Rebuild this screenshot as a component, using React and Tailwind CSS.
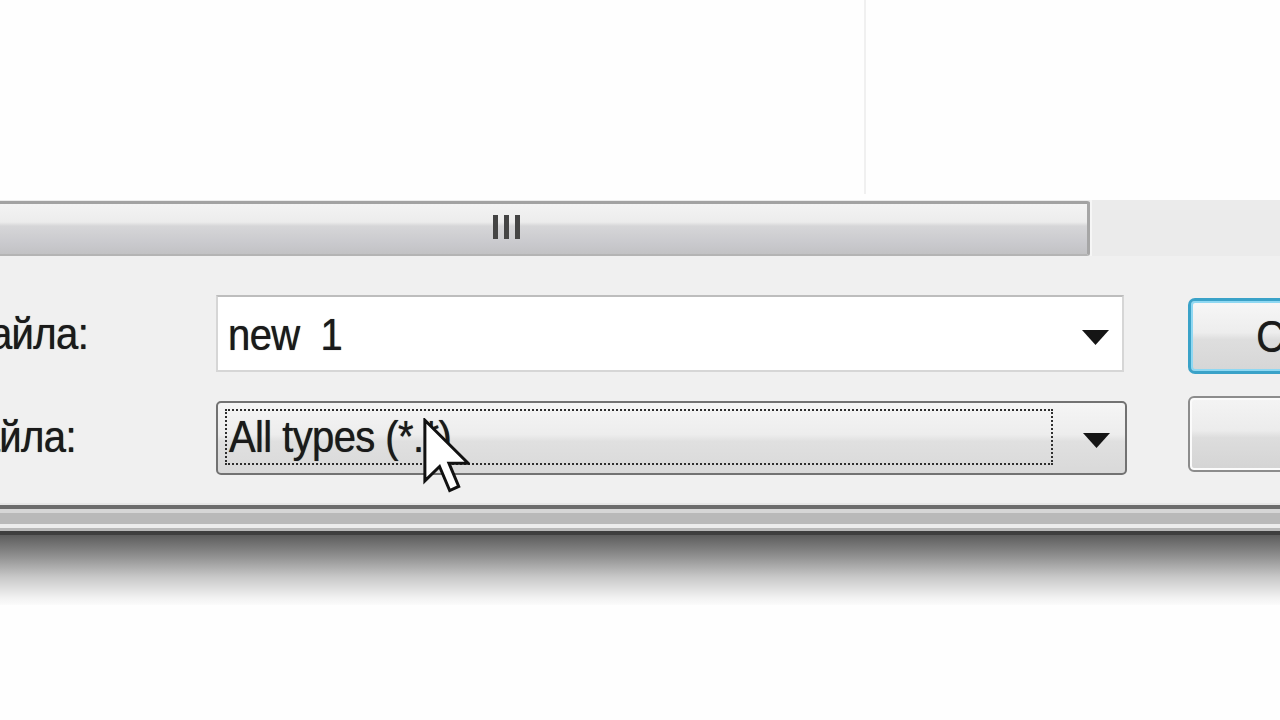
import React from "react";

function Arrow() {
  return (
    <svg width="27" height="15" viewBox="0 0 27 15" className="shrink-0">
      <path d="M0 0H27L13.5 15Z" fill="#151515" />
    </svg>
  );
}

function Cursor() {
  return (
    <svg
      width="47"
      height="76"
      viewBox="0 0 12.5 20"
      className="absolute left-[423px] top-[418px]"
    >
      <path
        d="M0.5 0.5V16.6L4.4 12.8L7.1 19.2L9.5 18.1L6.9 11.9H12Z"
        fill="#ffffff"
        stroke="#111"
        strokeWidth="0.8"
        strokeLinejoin="miter"
      />
    </svg>
  );
}

function Txt({ children, className = "" }) {
  return (
    <span
      className={
        "inline-block whitespace-pre text-[40px] leading-none tracking-[-0.6px] text-[#1a1a1a] origin-bottom scale-y-[1.1] [text-shadow:0_0_0.7px_#333] " +
        className
      }
    >
      {children}
    </span>
  );
}

export default function App() {
  return (
    <div className="relative w-[1280px] h-[720px] overflow-hidden bg-[#fefefe] font-['Liberation_Sans',Arial,sans-serif]">
      {/* top white area with faint vertical line */}
      <div className="h-[200px] flex">
        <div className="w-[864px] shrink-0" />
        <div className="w-[2px] h-[194px] bg-[#f0f0f0]" />
      </div>

      {/* horizontal scrollbar */}
      <div className="h-[56px] flex bg-[#ebebeb]">
        <div className="mt-[1px] w-[1090px] h-[55px] shrink-0 border-t-[3px] border-b-2 border-r-[3px] border-t-[#a2a2a2] border-b-[#b4b4b4] border-r-[#a6a6a6] rounded-r-[3px] bg-[linear-gradient(to_bottom,#f3f3f3_0%,#ececec_36%,#d6d6d8_44%,#c9c9cd_80%,#c2c2c4_100%)] flex items-center">
          <div className="ml-[493px] flex gap-[6px] -mt-[4px]">
            <div className="w-[5px] h-[24px] bg-[#444]" />
            <div className="w-[5px] h-[24px] bg-[#444]" />
            <div className="w-[5px] h-[24px] bg-[#444]" />
          </div>
        </div>
        <div className="flex-1 border-l-2 border-[#f6f6f6]" />
      </div>

      {/* dialog body */}
      <div className="h-[247px] bg-[#f0f0f0] flex flex-col pt-[39px]">
        {/* row 1 */}
        <div className="flex items-start">
          <div className="w-[216px] shrink-0 h-[77px] pt-[21px]">
            <div className="-ml-[129px]">
              <Txt>Имя файла:</Txt>
            </div>
          </div>
          <div className="w-[908px] h-[77px] shrink-0 bg-white border-2 border-[#d6d6d6] border-t-[#bdbdbd] flex items-start pl-[10px] pr-[13px]">
            <div className="flex-1 pt-[20px]">
              <Txt>new  1</Txt>
            </div>
            <div className="pt-[33px]">
              <Arrow />
            </div>
          </div>
          <div className="ml-[64px] mt-[3px] w-[330px] h-[76px] shrink-0 rounded-[7px] border-[3px] border-[#3aa2c8] shadow-[inset_0_0_0_2px_#8fd8f2] bg-[linear-gradient(to_bottom,#f7f7f7_0%,#ededed_45%,#dedede_55%,#d6d6d6_100%)] flex items-start justify-center pt-[18px]">
            <Txt>Сохранить</Txt>
          </div>
        </div>

        {/* row 2 */}
        <div className="flex items-start mt-[27px]">
          <div className="w-[216px] shrink-0 h-[74px] pt-[18px]">
            <div className="-ml-[130px]">
              <Txt>Тип файла:</Txt>
            </div>
          </div>
          <div className="w-[911px] h-[74px] shrink-0 rounded-[5px] border-2 border-[#727272] bg-[linear-gradient(to_bottom,#f5f5f5_0%,#ededed_45%,#e0e0e0_55%,#d9d9d9_100%)] flex items-start pl-[7px] pr-[15px] pt-[6px]">
            <div className="w-[828px] h-[56px] border-2 border-dotted border-[#2e2e2e] pl-[2px] pt-[8px] shrink-0">
              <Txt>All types (*.*)</Txt>
            </div>
            <div className="flex-1" />
            <div className="pt-[24px]">
              <Arrow />
            </div>
          </div>
          <div className="ml-[61px] -mt-[5px] w-[330px] h-[76px] shrink-0 rounded-[6px] border-2 border-[#8c8c8c] shadow-[inset_0_0_0_2px_#fbfbfb] bg-[linear-gradient(to_bottom,#f4f4f4_0%,#ececec_45%,#dddddd_55%,#d4d4d4_100%)] flex items-start justify-center pt-[18px]">
            <Txt>Отмена</Txt>
          </div>
        </div>
      </div>

      {/* dialog bottom edge */}
      <div className="h-[2px] bg-[#e6e6e6]" />
      <div className="h-[4px] bg-[#6c6c6c]" />
      <div className="h-[4px] bg-[#d6d6d6]" />
      <div className="h-[11px] bg-[#b9b9b9]" />
      <div className="h-[4px] bg-[#ececec]" />
      <div className="h-[3px] bg-[#b8b8b8]" />
      <div className="h-[4px] bg-[#3e3e3e]" />
      {/* shadow */}
      <div className="h-[70px] bg-[linear-gradient(to_bottom,#5c5c5c_0%,#8f8f8f_30%,#c8c8c8_60%,#f2f2f2_90%,#fbfbfb_100%)]" />

      <Cursor />
    </div>
  );
}
